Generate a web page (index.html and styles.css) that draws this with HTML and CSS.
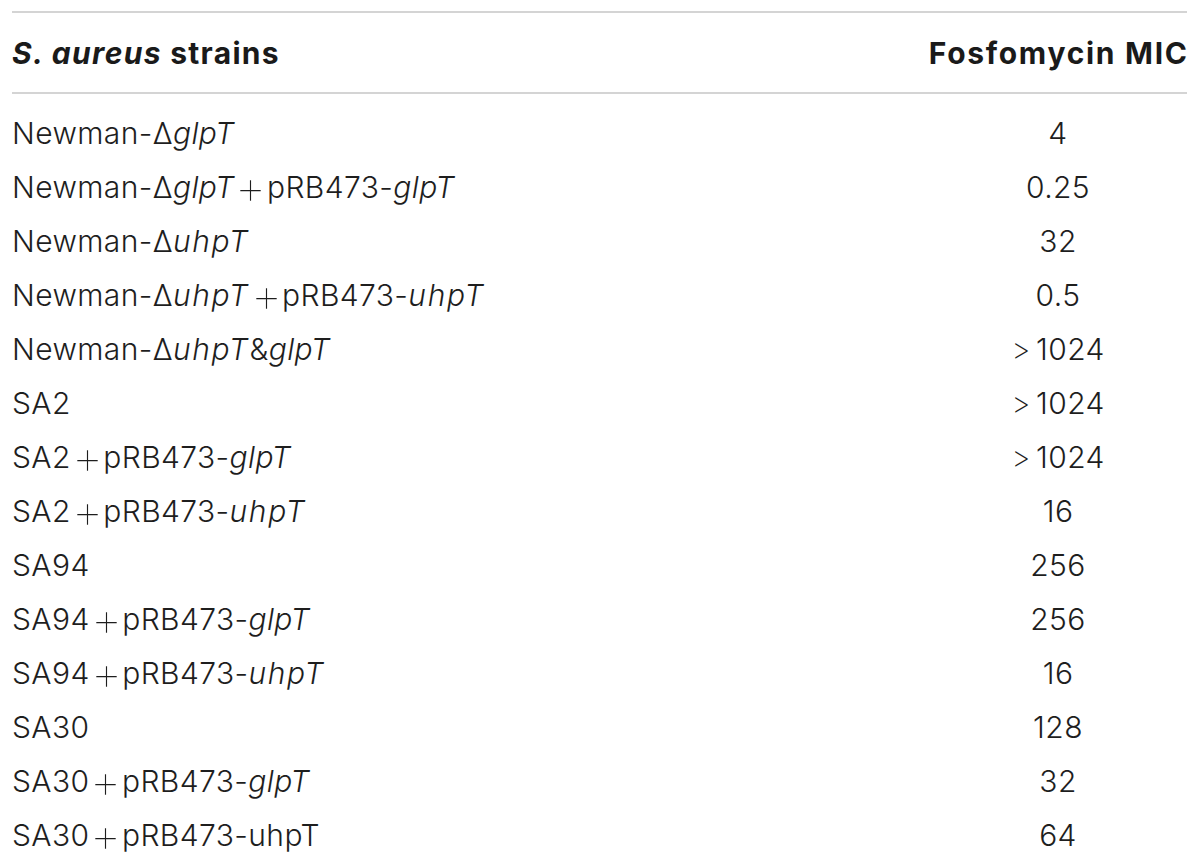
FILE: index.html
```html
<!DOCTYPE html>
<html>
<head>
<meta charset="utf-8">
<link rel="stylesheet" href="styles.css">
</head>
<body>
<div class="table">
  <div class="row head">
    <div class="c1"><i>S. aureus</i> strains</div>
    <div class="c2">Fosfomycin MIC</div>
  </div>
  <div class="body">
    <div class="row"><div class="c1">Newman-Δ<i>glpT</i></div><div class="c2">4</div></div>
    <div class="row"><div class="c1">Newman-Δ<i>glpT</i><span class="plus">+</span>pRB473-<i>glpT</i></div><div class="c2">0.25</div></div>
    <div class="row"><div class="c1">Newman-Δ<i class="u">uhpT</i></div><div class="c2">32</div></div>
    <div class="row"><div class="c1">Newman-Δ<i class="u">uhpT</i><span class="plus">+</span>pRB473-<i class="u">uhpT</i></div><div class="c2">0.5</div></div>
    <div class="row"><div class="c1">Newman-Δ<i class="u">uhpT</i>&amp;<i>glpT</i></div><div class="c2"><span class="gt">&gt;</span>1024</div></div>
    <div class="row"><div class="c1">SA2</div><div class="c2"><span class="gt">&gt;</span>1024</div></div>
    <div class="row"><div class="c1">SA2<span class="plus">+</span>pRB473-<i>glpT</i></div><div class="c2"><span class="gt">&gt;</span>1024</div></div>
    <div class="row"><div class="c1">SA2<span class="plus">+</span>pRB473-<i class="u">uhpT</i></div><div class="c2">16</div></div>
    <div class="row"><div class="c1">SA94</div><div class="c2">256</div></div>
    <div class="row"><div class="c1">SA94<span class="plus">+</span>pRB473-<i>glpT</i></div><div class="c2">256</div></div>
    <div class="row"><div class="c1">SA94<span class="plus">+</span>pRB473-<i class="u">uhpT</i></div><div class="c2">16</div></div>
    <div class="row"><div class="c1">SA30</div><div class="c2">128</div></div>
    <div class="row"><div class="c1">SA30<span class="plus">+</span>pRB473-<i>glpT</i></div><div class="c2">32</div></div>
    <div class="row"><div class="c1">SA30<span class="plus">+</span>pRB473-uhpT</div><div class="c2">64</div></div>
  </div>
</div>
</body>
</html>
```

FILE: styles.css
```css
html, body {
  margin: 0;
  padding: 0;
  background: #ffffff;
}

body {
  padding: 11px 13px 0 12px;
  font-family: "Inter", "Liberation Sans", sans-serif;
  color: #1e1e1e;
}

.table {
  border-top: 2px solid #d4d4d4;
}

.row {
  display: grid;
  grid-template-columns: 1fr 258px;
  align-items: center;
  height: 54px;
}

.head {
  height: 79px;
  border-bottom: 2px solid #d4d4d4;
  font-weight: 700;
  font-size: 30px;
  letter-spacing: 1.3px;
  color: #1a1a1a;
}

.head .c2 {
  text-align: right;
  letter-spacing: 1.7px;
  margin-right: -1.7px;
  margin-left: -8px;
}

.body {
  padding-top: 12px;
}

.body .row {
  font-weight: 300;
  font-size: 30px;
  letter-spacing: 0.4px;
}

.u {
  letter-spacing: 1.6px;
}

.plus {
  display: inline-block;
  font-weight: 100;
  transform: scale(1.65);
  margin: 0 6px 0 7px;
}

.c2 {
  text-align: center;
}

.gt {
  font-weight: 200;
  margin-right: 5px;
}
```
